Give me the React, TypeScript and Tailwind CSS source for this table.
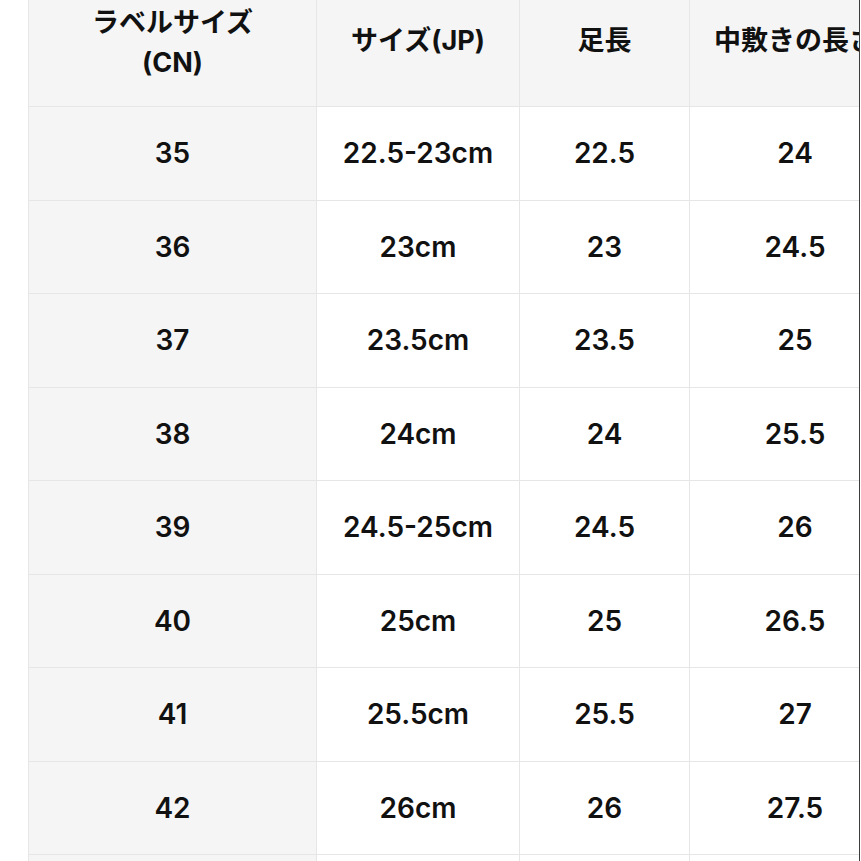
const rows = [
  ['35', '22.5-23cm', '22.5', '24'],
  ['36', '23cm', '23', '24.5'],
  ['37', '23.5cm', '23.5', '25'],
  ['38', '24cm', '24', '25.5'],
  ['39', '24.5-25cm', '24.5', '26'],
  ['40', '25cm', '25', '26.5'],
  ['41', '25.5cm', '25.5', '27'],
  ['42', '26cm', '26', '27.5'],
];

const font = "font-['Inter','Noto_Sans_CJK_JP',sans-serif]";

export default function App() {
  return (
    <div className={`w-[861px] h-[861px] overflow-hidden bg-white flex ${font} text-[#111]`}>
      <div className="w-[28px] shrink-0" />
      <div className="w-[831px] shrink-0 overflow-hidden">
        <div className="grid grid-cols-[288px_203px_170px_210px] w-max border-l border-[#e6e6e6]">
          {/* header */}
          <div className="h-[107px] pb-[21px] bg-[#f5f5f5] border-r border-b border-[#e6e6e6] flex items-center justify-center text-center text-[27px] font-bold leading-[40px]">
            ラベルサイズ<br />(CN)
          </div>
          <div className="h-[107px] pb-[23px] bg-[#f5f5f5] border-r border-b border-[#e6e6e6] flex items-center justify-center text-[27px] font-bold">
            サイズ(JP)
          </div>
          <div className="h-[107px] pb-[23px] bg-[#f5f5f5] border-r border-b border-[#e6e6e6] flex items-center justify-center text-[27px] font-bold">
            足長
          </div>
          <div className="h-[107px] pb-[23px] bg-[#f5f5f5] border-b border-[#e6e6e6] flex items-center justify-center text-[27px] font-bold whitespace-nowrap">
            中敷きの長さ
          </div>

          {rows.map((r) => (
            <div key={r[0]} className="contents">
              <div className="h-[93.5px] bg-[#f5f5f5] border-r border-b border-[#e6e6e6] flex items-center justify-center text-[28px] font-semibold">
                {r[0]}
              </div>
              <div className="h-[93.5px] bg-white border-r border-b border-[#e6e6e6] flex items-center justify-center text-[28px] font-semibold">
                {r[1]}
              </div>
              <div className="h-[93.5px] bg-white border-r border-b border-[#e6e6e6] flex items-center justify-center text-[28px] font-semibold">
                {r[2]}
              </div>
              <div className="h-[93.5px] bg-white border-b border-[#e6e6e6] flex items-center justify-center text-[28px] font-semibold">
                {r[3]}
              </div>
            </div>
          ))}

          <div className="h-[93.5px] bg-[#f5f5f5] border-r border-[#e6e6e6]" />
          <div className="h-[93.5px] bg-white border-r border-[#e6e6e6]" />
          <div className="h-[93.5px] bg-white border-r border-[#e6e6e6]" />
          <div className="h-[93.5px] bg-white" />
        </div>
      </div>
      <div className="w-px shrink-0 bg-[#3c3c3c]" />
      <div className="w-px shrink-0 bg-white" />
    </div>
  );
}
